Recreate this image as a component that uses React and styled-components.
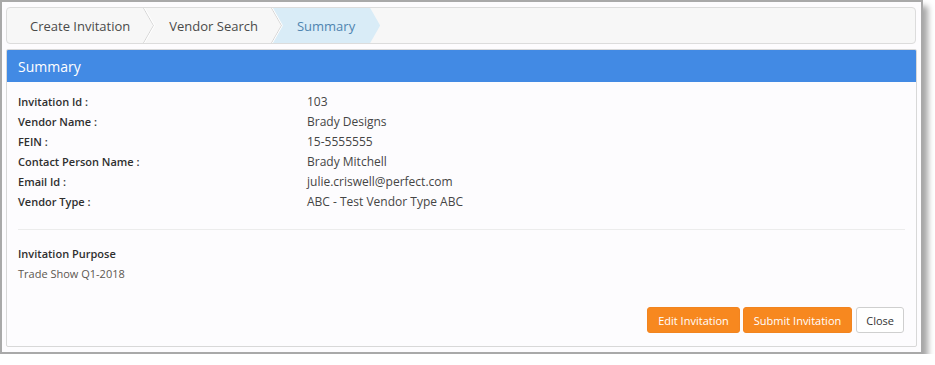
import React from "react";
import styled, { createGlobalStyle } from "styled-components";

const Global = createGlobalStyle`
  html, body { margin: 0; padding: 0; background: #ffffff; }
  body { font-family: "Open Sans", "Noto Sans", sans-serif; }
  * { box-sizing: border-box; }
`;

const Frame = styled.div`
  width: 923px;
  height: 354px;
  border: 2px solid #a9a9a9;
  background: #fdfcfe;
  box-shadow: 5px 6px 6px rgba(0, 0, 0, 0.35);
  padding: 5px 4px 0 4px;
  display: flex;
  flex-direction: column;
  gap: 5px;
`;

const Bar = styled.div`
  height: 37px;
  width: 910px;
  border: 1px solid #dcdcdc;
  border-radius: 4px;
  background: #f7f7f7;
  display: flex;
  align-items: stretch;
  overflow: hidden;
`;

const Step = styled.div`
  position: relative;
  display: flex;
  align-items: center;
  font-size: 13px;
  padding: 0 25px 0 ${(p) => (p.$first ? 23 : 24)}px;
  margin-left: ${(p) => (p.$first ? 0 : -10)}px;
  color: ${(p) => (p.$active ? "#4f84b0" : "#4a4a4a")};
  background: ${(p) => (p.$active ? "#d9ecf7" : "transparent")};
  clip-path: ${(p) =>
    p.$active
      ? "polygon(0 0, calc(100% - 10px) 0, 100% 50%, calc(100% - 10px) 100%, 0 100%, 10px 50%)"
      : "none"};
`;

const Chevron = styled.svg`
  position: absolute;
  right: 0;
  top: 0;
  width: 12px;
  height: 100%;
`;

const Panel = styled.div`
  width: 911px;
  height: 298px;
  border: 1px solid #d8d8d8;
  border-radius: 2px;
  display: flex;
  flex-direction: column;
  overflow: hidden;
`;

const Heading = styled.div`
  height: 32px;
  background: #428ae4;
  color: #ffffff;
  font-size: 14px;
  padding: 0 11px;
  display: flex;
  align-items: center;
`;

const Body = styled.div`
  flex: 1;
  padding: 9px 11px 13px 11px;
  display: flex;
  flex-direction: column;
`;

const Grid = styled.div`
  display: grid;
  grid-template-columns: 289px 1fr;
  grid-auto-rows: 20px;
  align-items: center;
`;

const Label = styled.div`
  font-size: 11px;
  color: #2f2f2f;
  font-weight: 600;
`;

const Value = styled.div`
  font-size: 12px;
  color: #454545;
`;

const Divider = styled.hr`
  border: 0;
  border-top: 1px solid #ececec;
  margin: 18px 0 14px 0;
`;

const PurposeTitle = styled.div`
  font-size: 11px;
  line-height: 20px;
  color: #2f2f2f;
  font-weight: 600;
`;

const PurposeText = styled.div`
  font-size: 11px;
  line-height: 20px;
  color: #5c5750;
`;

const Actions = styled.div`
  margin-top: auto;
  display: flex;
  justify-content: flex-end;
  gap: 3px;
`;

const Button = styled.button`
  height: 26px;
  padding: 0 ${(p) => (p.$plain ? 9 : 10)}px;
  font-family: inherit;
  font-size: 11px;
  border-radius: 3px;
  border: 1px solid ${(p) => (p.$plain ? "#cfcfcf" : "#f28420")};
  background: ${(p) => (p.$plain ? "#ffffff" : "#f7881f")};
  color: ${(p) => (p.$plain ? "#333333" : "#ffffff")};
  margin-left: ${(p) => (p.$plain ? 1 : 0)}px;
  margin-right: ${(p) => (p.$plain ? 1 : 0)}px;
`;

const steps = [
  { label: "Create Invitation" },
  { label: "Vendor Search" },
  { label: "Summary", active: true },
];

const rows = [
  ["Invitation Id :", "103"],
  ["Vendor Name :", "Brady Designs"],
  ["FEIN :", "15-5555555"],
  ["Contact Person Name :", "Brady Mitchell"],
  ["Email Id :", "julie.criswell@perfect.com"],
  ["Vendor Type :", "ABC - Test Vendor Type ABC"],
];

export default function App() {
  return (
    <>
      <Global />
      <Frame>
        <Bar>
          {steps.map((s, i) => (
            <Step key={s.label} $first={i === 0} $active={s.active}>
              {s.label}
              {!s.active && (
                <Chevron viewBox="0 0 12 36" preserveAspectRatio="none">
                  <polyline points="0.5,0 10.5,18 0.5,36" fill="none" stroke="#d4d4d4" strokeWidth="1" />
                  <polyline points="1.5,0 11.5,18 1.5,36" fill="none" stroke="#ffffff" strokeWidth="1" />
                </Chevron>
              )}
            </Step>
          ))}
        </Bar>
        <Panel>
          <Heading>Summary</Heading>
          <Body>
            <Grid>
              {rows.map(([l, v]) => (
                <React.Fragment key={l}>
                  <Label>{l}</Label>
                  <Value>{v}</Value>
                </React.Fragment>
              ))}
            </Grid>
            <Divider />
            <PurposeTitle>Invitation Purpose</PurposeTitle>
            <PurposeText>Trade Show Q1-2018</PurposeText>
            <Actions>
              <Button>Edit Invitation</Button>
              <Button>Submit Invitation</Button>
              <Button $plain>Close</Button>
            </Actions>
          </Body>
        </Panel>
      </Frame>
    </>
  );
}
